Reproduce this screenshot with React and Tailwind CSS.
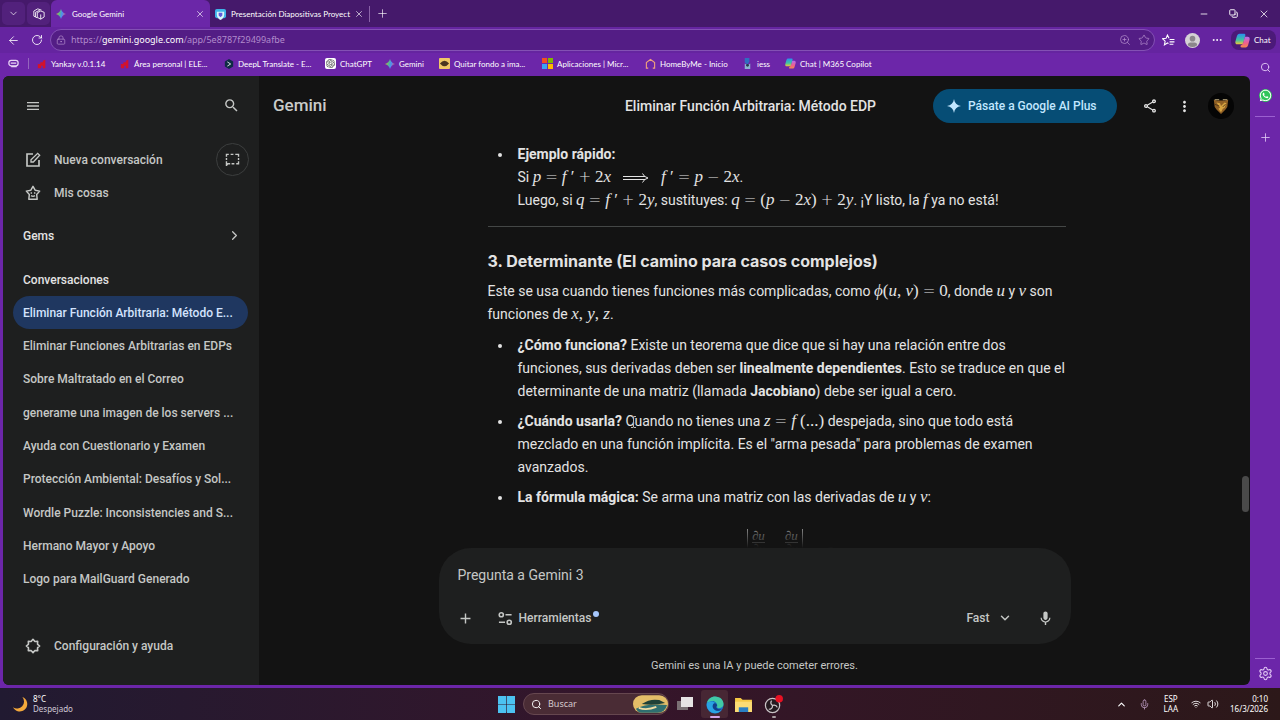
import React from "react";
import {
  ArrowLeft,
  ChevronDown,
  ChevronRight,
  ChevronUp,
  Copy,
  Ellipsis,
  LockKeyhole,
  Mic,
  Minus,
  Plus,
  RotateCw,
  Search,
  Settings,
  Star,
  Volume2,
  Wifi,
  X,
  ZoomIn,
} from "lucide-react";
import { FaWhatsapp } from "react-icons/fa";
import {
  MdAdd,
  MdMenu,
  MdMic,
  MdMoreVert,
  MdOutlineShare,
  MdSearch,
} from "react-icons/md";
import { SiOpenai } from "react-icons/si";

const chats = [
  "Eliminar Función Arbitraria: Método E...",
  "Eliminar Funciones Arbitrarias en EDPs",
  "Sobre Maltratado en el Correo",
  "generame una imagen de los servers ...",
  "Ayuda con Cuestionario y Examen",
  "Protección Ambiental: Desafíos y Sol...",
  "Wordle Puzzle: Inconsistencies and S...",
  "Hermano Mayor y Apoyo",
  "Logo para MailGuard Generado",
];

const Spark = ({ className }) => (
  <svg viewBox="0 0 24 24" className={className} fill="currentColor">
    <path d="M12 0c1 7 5 11 12 12-7 1-11 5-12 12-1-7-5-11-12-12C7 11 11 7 12 0z" />
  </svg>
);

const GeminiLogo = () => (
  <svg viewBox="0 0 24 24" className="size-[10px] shrink-0">
    <defs>
      <linearGradient id="gem" x1="0" y1="0.4" x2="1" y2="0.6">
        <stop offset="0" stopColor="#f5b93c" />
        <stop offset="0.3" stopColor="#5fbf7a" />
        <stop offset="0.6" stopColor="#4c8df6" />
        <stop offset="1" stopColor="#e8566b" />
      </linearGradient>
    </defs>
    <path
      fill="url(#gem)"
      d="M12 0c2 6 5 9.500 12 12-7 2.500-10 6-12 12-2-6-5-9.500-12-12C7 9.500 10 6 12 0z"
    />
  </svg>
);

const CopilotLogo = ({ className }) => (
  <svg viewBox="0 0 24 24" className={className}>
    <defs>
      <linearGradient id="copA" x1="0" y1="0" x2="0" y2="1">
        <stop offset="0" stopColor="#2a8df0" />
        <stop offset="0.6" stopColor="#3fc4a0" />
        <stop offset="1" stopColor="#f0c53a" />
      </linearGradient>
      <linearGradient id="copB" x1="0" y1="0" x2="0" y2="1">
        <stop offset="0" stopColor="#b46af0" />
        <stop offset="0.6" stopColor="#f0608a" />
        <stop offset="1" stopColor="#f58a4a" />
      </linearGradient>
    </defs>
    <path fill="url(#copA)" d="M7 1h7c2 0 3 1 2.500 3l-3 11c-.6 2-1.500 3-3.500 3H4c-3 0-4-2-3.300-5L3 5c.7-2.600 2-4 4-4z" />
    <path fill="url(#copB)" d="M16 6h4c3 0 4 2 3.300 5L21 19c-.7 2.600-2 4-4 4h-6c-2 0-2.500-1-2-3 2-1 3.500-2 4-4l2-7c.3-1.500.5-2 1-3z" />
  </svg>
);

const RedBlocks = () => (
  <svg viewBox="0 0 12 12" className="size-[10px] shrink-0" fill="#d3122c">
    <path d="M1 6h3V4h3V2l3-1v10H7V8H5v3H1z" />
  </svg>
);

const bookmarks = [
  { name: "Yankay v.0.1.14", icon: <RedBlocks />, width: "w-[83px]" },
  { name: "Área personal | ELE...", icon: <RedBlocks />, width: "w-[104px]" },
  {
    name: "DeepL Translate - E...",
    width: "w-[101px]",
    icon: (
      <svg viewBox="0 0 12 12" className="size-[10px] shrink-0">
        <path d="M6 0l5 3v6l-5 3-5-3V3z" fill="#0f2b46" />
        <path d="M4 3.500l4 2.500-4 2.500" fill="none" stroke="#fff" />
      </svg>
    ),
  },
  {
    name: "ChatGPT",
    width: "w-[60px]",
    icon: (
      <span className="flex size-[11px] shrink-0 items-center justify-center rounded-[2px] bg-white text-[9px] text-[#444]">
        <SiOpenai />
      </span>
    ),
  },
  { name: "Gemini", icon: <GeminiLogo />, width: "w-[54px]" },
  {
    name: "Quitar fondo a ima...",
    width: "w-[103px]",
    icon: (
      <svg viewBox="0 0 12 12" className="size-[11px] shrink-0">
        <rect width="12" height="12" rx="1" fill="#f0c766" />
        <path d="M1 6q5-6 10 0q-5 6-10 0z" fill="#4b3420" />
      </svg>
    ),
  },
  {
    name: "Aplicaciones | Micr...",
    width: "w-[103px]",
    icon: (
      <svg viewBox="0 0 12 12" className="size-[11px] shrink-0">
        <path fill="#f25022" d="M0 0h5.500v5.500H0z" />
        <path fill="#7fba00" d="M6.500 0H12v5.500H6.500z" />
        <path fill="#39a5f5" d="M0 6.500h5.500V12H0z" />
        <path fill="#ffb900" d="M6.500 6.500H12V12H6.500z" />
      </svg>
    ),
  },
  {
    name: "HomeByMe - Inicio",
    width: "w-[97px]",
    icon: (
      <svg viewBox="0 0 12 12" className="size-[11px] shrink-0" fill="none" stroke="#f0a27c" strokeWidth="1.200">
        <path d="M3.500 11H1.500V5L6 1.500 10.500 5v6h-2" />
      </svg>
    ),
  },
  {
    name: "iess",
    width: "w-[43px]",
    icon: (
      <svg viewBox="0 0 12 12" className="size-[11px] shrink-0">
        <path d="M3 0h5v4L6 7 3 5z" fill="#2f6fc0" />
        <path d="M3 6l3 2 3-2v6H3z" fill="#89b5cf" />
        <circle cx="6" cy="8" r="1.500" fill="#263b50" />
      </svg>
    ),
  },
  {
    name: "Chat | M365 Copilot",
    width: "w-[90px]",
    icon: <CopilotLogo className="size-[11px] shrink-0" />,
  },
];

const TitleBar = () => (
  <div className="flex h-[27px] shrink-0 items-center bg-[#45196b] text-[8px] text-white">
    <div className="flex gap-[2px] pr-px pl-[2px]">
      <button aria-label="Buscar pestañas" className="flex size-[23px] items-center justify-center rounded-[5px] bg-[#52217c]">
        <ChevronDown size={11} strokeWidth={1.5} />
      </button>
      <button aria-label="Espacios de trabajo" className="flex size-[23px] items-center justify-center rounded-[5px] bg-[#52217c]">
        <svg viewBox="0 0 14 14" className="size-[12px]" fill="none" stroke="#fff">
          <path d="M3 10.500l-2-1v-6L5.500 1 10 2.500M5 11.500l-2-1V5L8 2.500M5 5.500l4-2 4 1.500v5.500l-4 2.500-4-2zM9 7.500V13" />
        </svg>
      </button>
    </div>
    <div className="flex h-full w-[159px] items-center rounded-t-[6px] bg-[#6b27a8] pt-px pr-[5px] pl-[5px]">
      <GeminiLogo />
      <span className="ml-[6px] flex-1">Google Gemini</span>
      <button aria-label="Cerrar Google Gemini">
        <X size={10} strokeWidth={1.5} />
      </button>
    </div>
    <div className="flex h-full w-[158px] items-center pt-px pr-[4px] pl-[5px]">
      <svg viewBox="0 0 12 12" className="size-[11px] shrink-0">
        <rect width="12" height="10" rx="2" fill="#3fb3e8" />
        <path d="M2 3h8v3c0 3-2 5-4 6-2-1-4-3-4-6z" fill="#d8f6fb" />
        <path d="M4 4h4v3L6 9 4 7z" fill="#6259d8" />
      </svg>
      <span className="ml-[5px] flex-1 whitespace-nowrap">Presentación Diapositivas Proyect</span>
      <button aria-label="Cerrar Presentación">
        <X size={10} strokeWidth={1.5} />
      </button>
    </div>
    <button aria-label="Nueva pestaña" className="ml-px flex h-[16px] items-center border-l border-[#8a62a8] pl-[6px]">
      <Plus size={13} strokeWidth={1.2} />
    </button>
    <div className="ml-auto flex items-center gap-[20px] pr-[10px]">
      <button aria-label="Minimizar">
        <Minus size={10} strokeWidth={2} />
      </button>
      <button aria-label="Restaurar">
        <Copy size={9} strokeWidth={2.5} className="-scale-x-100 rotate-90" />
      </button>
      <button aria-label="Cerrar">
        <X size={12} strokeWidth={1.5} />
      </button>
    </div>
  </div>
);

const AddressBar = () => (
  <div className="flex h-[26px] shrink-0 items-center bg-[#6524a0] text-white">
    <button aria-label="Atrás" className="ml-[7px]">
      <ArrowLeft size={13} strokeWidth={1.5} />
    </button>
    <button aria-label="Actualizar" className="ml-[11px]">
      <RotateCw size={12} strokeWidth={1.7} />
    </button>
    <div className="ml-[7px] flex h-[22px] flex-1 items-center rounded-full border border-[#8350b4] bg-[#531d85] pr-[4px] pl-[5px] font-['Noto_Sans',sans-serif] text-[9px] text-[#b18bcb]">
      <LockKeyhole size={10} strokeWidth={1.7} />
      <div
        role="textbox"
        aria-label="Dirección"
        contentEditable
        suppressContentEditableWarning
        className="ml-[5px] flex-1"
      >
        https://<span className="text-white">gemini.google.com</span>/app/5e8787f29499afbe
      </div>
      <button aria-label="Zoom">
        <ZoomIn size={12} strokeWidth={1.5} />
      </button>
      <button aria-label="Agregar a favoritos" className="ml-[7px]">
        <Star size={12} strokeWidth={1.5} />
      </button>
    </div>
    <button aria-label="Favoritos" className="ml-[7px]">
      <svg viewBox="0 0 24 24" className="size-[13px]" fill="none" stroke="currentColor" strokeWidth="2">
        <path d="M13 8l-3-6-2.500 6-6.500.8 4.800 4.400L4.500 20l5.500-3.500 2 1.200M14 10h9M14 14.500h9M14 19h7" />
      </svg>
    </button>
    <button aria-label="Perfil" className="ml-[10px] size-[15px] overflow-hidden rounded-full bg-[#d5d2d5]">
      <svg viewBox="0 0 16 16" fill="#8b868b">
        <circle cx="8" cy="6" r="3" />
        <path d="M3 13q0-3 3-3h4q3 0 3 3-5 4-10 0z" />
      </svg>
    </button>
    <button aria-label="Más" className="ml-[11px]">
      <Ellipsis size={12} strokeWidth={2} />
    </button>
    <button className="mr-[4px] ml-[8px] flex h-[20px] w-[45px] items-center gap-[4px] rounded-[8px] bg-[#4b1a79] pl-[4px] text-[8px]">
      <CopilotLogo className="size-[15px]" />
      Chat
    </button>
  </div>
);

const Bookmarks = () => (
  <nav className="flex h-[23px] shrink-0 items-center pb-[2px] text-[8px] text-white">
    <span className="mr-[8px] ml-[5px] flex h-[11px] w-[21px] items-center border-r border-[#9465bd]">
      <svg viewBox="0 0 12 12" className="size-[11px]" fill="none" stroke="#e8d6f5" strokeWidth="1.4">
        <rect x="1" y="2.5" width="10" height="6" rx="2.500" />
        <path d="M3 5.500h6M3.500 9.500h6" />
      </svg>
    </span>
    <div className="flex">
      {bookmarks.map((item) => (
        <a key={item.name} href="#" className={`flex items-center gap-[4px] whitespace-nowrap ${item.width}`}>
          {item.icon}
          {item.name}
        </a>
      ))}
    </div>
  </nav>
);

const Sidebar = () => (
  <aside className="flex w-[256px] shrink-0 flex-col bg-[#1e1f1f] px-[10px] pb-[23px] text-[12px] font-medium text-[#c5c7c5]">
    <div className="flex h-[59px] items-center justify-between pr-[9px] pl-[12px]">
      <button aria-label="Menú">
        <MdMenu size={16} />
      </button>
      <button aria-label="Buscar">
        <MdSearch size={17} />
      </button>
    </div>
    <div className="mt-[8px] flex h-[33px] items-center justify-between pl-[12px]">
      <button className="flex items-center gap-[13px]">
        <svg viewBox="0 0 24 24" className="size-[16px]" fill="none" stroke="currentColor" strokeWidth="2.5">
          <path d="M12 3H3v18h18v-9" />
          <path d="M9 15v-3.500L19 2l3 3-9.500 10z" strokeWidth="2" />
        </svg>
        Nueva conversación
      </button>
      <button aria-label="Chat temporal" className="flex size-[33px] items-center justify-center rounded-full border border-[#3c3e3e]">
        <svg viewBox="0 0 16 14" className="h-[13px] w-[15px]" fill="none" stroke="currentColor" strokeWidth="1.5">
          <path d="M1.500 4V1.500H4M6 1.500h3M11 1.500h3.500V4M14.500 5.500v2M14.500 9v2.500H12M10 11.500H7M5.500 11.500H3l-1.500 2V9M1.500 7.500v-2" />
        </svg>
      </button>
    </div>
    <button className="flex h-[33px] items-center gap-[13px] pl-[12px]">
      <svg viewBox="0 0 24 24" className="size-[16px]" fill="none" stroke="currentColor" strokeWidth="2.2" strokeLinejoin="round">
        <path d="M12 2l3.200 5.800 6.800 1.400-4.500 5 .8 7.300H5.700l.8-7.300L2 9.200l6.800-1.400z" />
        <path d="M9.500 11v2M14.500 11v2M9 16q3 2 6 0" />
      </svg>
      Mis cosas
    </button>
    <button className="mt-[10px] flex h-[33px] items-center justify-between pr-[7px] pl-[10px] text-[#e3e3e3]">
      Gems
      <ChevronRight size={15} strokeWidth={2} className="text-[#c5c7c5]" />
    </button>
    <h2 className="mt-[11px] flex h-[33px] items-center pl-[10px] text-[#e3e3e3]">Conversaciones</h2>
    <nav className="mr-px grid h-[300px] auto-rows-fr">
      {chats.map((chat, i) => (
        <a
          key={chat}
          href="#"
          className={`flex items-center rounded-full pl-[10px] whitespace-nowrap ${
            i === 0 ? "bg-[#1f3760] text-[#d3e3fd]" : ""
          }`}
        >
          {chat}
        </a>
      ))}
    </nav>
    <button className="mt-auto flex h-[33px] items-center gap-[13px] pl-[12px]">
      <svg viewBox="0 0 24 24" className="size-[16px]" fill="none" stroke="currentColor" strokeWidth="2.4" strokeLinejoin="round">
        <path d="M12 2l2.500 3a7.500 7.500 0 0 1 .5.2l4-.2-.2 4 .2.500 3 2.500-3 2.500-.2.5.2 4-4-.2-.5.200L12 22l-2.500-3-.5-.2-4 .2.200-4-.2-.5L2 12l3-2.500.2-.5-.2-4 4 .2.500-.2z" />
      </svg>
      Configuración y ayuda
    </button>
  </aside>
);

// Inline formula: letters go in <i>, operators in <Op>
const Tex = ({ children }) => (
  <span className="font-['Liberation_Serif',serif] text-[17px] leading-none whitespace-nowrap">{children}</span>
);

const Op = ({ children }) => (
  <span className="mx-[4px] font-['DejaVu_Sans',sans-serif] text-[15px] leading-none font-extralight">{children}</span>
);

const Implies = () => (
  <svg viewBox="0 0 26 10" className="mx-[12px] inline h-[10px] w-[26px]" fill="none" stroke="currentColor">
    <path d="M0 3.500h22M0 6.500h22M19.500 0.500q1.500 3.500 5.500 4.500q-4 1-5.500 4.500" />
  </svg>
);

const Fraction = ({ below }) => (
  <span className="flex flex-col items-center text-[13px] leading-[12px] italic">
    <span className="border-b border-current pt-px">∂u</span>
    <span>∂{below}</span>
  </span>
);

const Header = () => (
  <header className="flex h-[60px] shrink-0 items-center pl-[14px] text-[#e3e3e3]">
    <div className="flex-1 text-[17px] font-medium text-[#c9cbc9]">Gemini</div>
    <h1 className="pr-[6px] text-[14px] font-medium">Eliminar Función Arbitraria: Método EDP</h1>
    <div className="flex flex-1 items-center justify-end pr-[16px]">
      <button className="flex h-[34px] w-[184px] items-center gap-[7px] rounded-full bg-[#064d75] pl-[14px] text-[12px] font-medium whitespace-nowrap text-[#c2e7ff]">
        <Spark className="size-[14px]" />
        Pásate a Google AI Plus
      </button>
      <button aria-label="Compartir" className="ml-[25px]">
        <MdOutlineShare size={16} />
      </button>
      <button aria-label="Más opciones" className="ml-[18px]">
        <MdMoreVert size={17} />
      </button>
      <button aria-label="Cuenta" className="ml-[15px] flex size-[26px] items-center justify-center rounded-full bg-[#050505]">
        <svg viewBox="0 0 20 20" className="size-[18px]">
          <path d="M2 3q8 2 16 0l-1 8-2 3-5 5-5-5-2-3z" fill="#8f5f24" />
          <path d="M5 6l4 1 1 3 4-4 2 1-2 5-2 1-2 4-3-4 2-1z" fill="#d7a340" />
          <path d="M3 8l5 2M12 11l3-3" stroke="#4f3518" />
          <path d="M3 3h5M12 3h5" stroke="#c9b98a" />
        </svg>
      </button>
    </div>
  </header>
);

const Answer = () => (
  <div className="relative min-h-0 flex-1 overflow-hidden">
    <div className="mx-auto w-full max-w-[632px] pt-[7px] pr-[5px] pl-[49px] text-[14px] leading-[23px] text-[#e3e3e3]">
      <ul className="list-disc pl-[25px]">
        <li className="pl-[5px]">
          <strong>Ejemplo rápido:</strong>
          <br />
          Si <Tex><i>p</i><Op>=</Op><i>f</i> ′<Op>+</Op>2<i>x</i><Implies /><i>f</i> ′<Op>=</Op><i>p</i><Op>−</Op>2<i>x</i></Tex>.
          <br />
          Luego, si <Tex><i>q</i><Op>=</Op><i>f</i> ′<Op>+</Op>2<i>y</i></Tex>, sustituyes:{" "}
          <Tex><i>q</i><Op>=</Op>(<i>p</i><Op>−</Op>2<i>x</i>)<Op>+</Op>2<i>y</i></Tex>. ¡Y listo, la{" "}
          <Tex><i>f</i></Tex> ya no está!
        </li>
      </ul>
      <hr className="mt-[14px] border-[#444746]" />
      <h3 className="mt-[22px] font-['Inter',sans-serif] text-[16px] leading-[24px] font-bold">
        3. Determinante (El camino para casos complejos)
      </h3>
      <p className="mt-[7px]">
        Este se usa cuando tienes funciones más complicadas, como{" "}
        <Tex><i>ϕ</i>(<i>u</i>, <i>v</i>)<Op>=</Op>0</Tex>, donde <Tex><i>u</i></Tex> y <Tex><i>v</i></Tex> son
        <br />
        funciones de <Tex><i>x</i>, <i>y</i>, <i>z</i></Tex>.
      </p>
      <ul className="mt-[8px] flex list-disc flex-col gap-[7px] pl-[25px]">
        <li className="pl-[5px]">
          <strong>¿Cómo funciona?</strong> Existe un teorema que dice que si hay una relación entre dos
          <br />
          funciones, sus derivadas deben ser <strong>linealmente dependientes</strong>. Esto se traduce en que el
          <br />
          determinante de una matriz (llamada <strong>Jacobiano</strong>) debe ser igual a cero.
        </li>
        <li className="pl-[5px]">
          <strong>¿Cuándo usarla?</strong>{" "}
          <span className="relative">
            C
            {/* mouse pointer resting on the word */}
            <svg viewBox="0 0 7 12" className="absolute top-[3px] left-[5px] h-[12px] w-[7px]" fill="none" stroke="#b5b5b5">
              <path d="M1 .5h2l.5.5.5-.5h2M3.500 1v10M1 11.500h2l.5-.5.5.5h2" />
            </svg>
          </span>
          uando no tienes una <Tex><i>z</i><Op>=</Op><i>f</i> (...)</Tex> despejada, sino que todo está
          <br />
          mezclado en una función implícita. Es el "arma pesada" para problemas de examen
          <br />
          avanzados.
        </li>
        <li className="pl-[5px]">
          <strong>La fórmula mágica:</strong> Se arma una matriz con las derivadas de <Tex><i>u</i></Tex> y{" "}
          <Tex><i>v</i></Tex>:
        </li>
      </ul>
      <div className="mt-[20px] flex items-start justify-center gap-[10px] pl-[29px] font-['Liberation_Serif',serif] text-[17px] text-[#8a8a8a]">
        <div className="flex h-[60px] gap-[20px] border-x border-current px-[4px]">
          <Fraction below="x" />
          <Fraction below="y" />
        </div>
        <span className="pt-[12px]">= 0</span>
      </div>
    </div>
    <div className="absolute inset-x-0 bottom-0 h-[20px] bg-gradient-to-b from-transparent to-[#131313]" />
  </div>
);

const Composer = () => (
  <div className="mx-auto w-full max-w-[632px] shrink-0 rounded-[32px] bg-[#1e1f1f] pt-[16px] pr-[17px] pb-[12px] pl-[19px] text-[#c5c7c5]">
    <input
      aria-label="Pregunta a Gemini 3"
      placeholder="Pregunta a Gemini 3"
      className="block h-[22px] w-full bg-transparent text-[14px] outline-none placeholder:text-[#c5c7c5]"
    />
    <div className="mt-[18px] flex h-[28px] items-center text-[12px] font-medium">
      <button aria-label="Agregar archivos" className="-ml-px">
        <MdAdd size={17} />
      </button>
      <button className="ml-[24px] flex items-center gap-[6px]">
        <svg viewBox="0 0 16 16" className="size-[15px]" fill="none" stroke="currentColor" strokeWidth="1.7">
          <circle cx="3.5" cy="4" r="2.2" />
          <path d="M8 4h6.500M1 12h6.500" />
          <circle cx="12" cy="12" r="2.2" />
        </svg>
        Herramientas
        <span className="mb-[8px] -ml-[4px] size-[6px] rounded-full bg-[#a8c7fa]" />
      </button>
      <button className="ml-auto flex items-center gap-[8px]">
        Fast
        <ChevronDown size={14} strokeWidth={2.5} />
      </button>
      <button aria-label="Micrófono" className="ml-[25px]">
        <MdMic size={17} />
      </button>
    </div>
  </div>
);

const EdgeSidebar = () => (
  <aside className="flex w-[30px] shrink-0 flex-col items-center pt-[9px] pb-[7px] text-[#e3c9f5]">
    <button aria-label="Buscar en la barra lateral">
      <Search size={11} strokeWidth={2} />
    </button>
    <button aria-label="WhatsApp" className="mt-[16px] flex size-[13px] items-center justify-center rounded-full bg-[#2fc65a] text-white">
      <FaWhatsapp size={13} />
    </button>
    <hr className="mt-[14px] w-[20px] border-[#9b5fd0]" />
    <button aria-label="Personalizar" className="mt-[14px]">
      <Plus size={13} strokeWidth={1.5} />
    </button>
    <hr className="mt-auto w-[20px] border-[#9b5fd0]" />
    <button aria-label="Configuración" className="mt-[7px]">
      <Settings size={15} strokeWidth={1.7} />
    </button>
  </aside>
);

const Taskbar = () => (
  <footer className="flex h-[32px] shrink-0 items-center bg-gradient-to-r from-[#211a31] via-[#35152a] to-[#2c1819] font-['Noto_Sans',sans-serif] text-[9px] text-white">
    <div className="flex flex-1 items-center gap-[5px] pl-[13px]">
      <svg viewBox="0 0 16 16" className="size-[15px]">
        <path d="M10 0a8 8 0 1 1-10 11 7.500 7.500 0 0 0 10-11z" fill="#f3a83b" />
      </svg>
      <div className="text-[8px] leading-[10px]">
        <div>8°C</div>
        <div className="text-[#cfc8d6]">Despejado</div>
      </div>
    </div>
    <div className="flex items-center">
      <button aria-label="Inicio">
        <svg viewBox="0 0 16 16" className="size-[17px]" fill="#4cc2f1">
          <path d="M0 0h7.700v7.700H0zM8.300 0H16v7.700H8.300zM0 8.300h7.700V16H0zM8.300 8.300H16V16H8.300z" />
        </svg>
      </button>
      <label className="ml-[8px] flex h-[22px] w-[146px] items-center rounded-full border border-[#66474f] bg-[#4a2c35] pl-[7px]">
        <Search size={11} strokeWidth={2} />
        <input
          aria-label="Buscar"
          placeholder="Buscar"
          className="ml-[6px] w-[60px] min-w-0 flex-1 bg-transparent text-[9px] outline-none placeholder:text-[#d5c9cd]"
        />
        <svg viewBox="0 0 36 18" className="h-[18px] w-[35px]">
          <rect width="36" height="18" rx="9" fill="#e3bd68" />
          <path d="M3 14q10-6 32-4-2 8-10 8H9q-4 0-6-4z" fill="#2f6f70" />
          <path d="M9 9q9-6 18-4l6 3q-12 3-24 1z" fill="#1f4138" />
          <path d="M6 13q8 3 18-1" fill="none" stroke="#f0dca4" strokeWidth="2" />
        </svg>
      </label>
      <button aria-label="Vista de tareas" className="ml-[8px]">
        <svg viewBox="0 0 16 16" className="size-[16px]">
          <path d="M0 5h11v9H0z" fill="#7a7074" />
          <path d="M4 1h12v10H4z" fill="#e6e3e4" />
        </svg>
      </button>
      <button aria-label="Microsoft Edge" className="ml-[8px] flex h-[28px] w-[27px] flex-col items-center justify-end gap-[2px] rounded-[3px] bg-[#472734]">
        <svg viewBox="0 0 20 20" className="size-[18px]">
          <circle cx="10" cy="10" r="9.5" fill="#1b6fc2" />
          <path d="M1 8C2 3 6 .5 10 .5c6 0 9.500 4 9.500 8.500 0 3-2 4.500-5 4.500-2 0-3-1-2-2C13 8 10 5 6.500 5.500 4 6 2 7 1 8z" fill="#41c9a5" />
          <path d="M1 8c2-2 7-3 9 0-3 0-4 6 1 8 3 1 5 0 6.500-1-3 5-11 6-15 0C1 13 .5 10 1 8z" fill="#29a3e3" />
          <path d="M10 8c-3 0-4 6 1 8 3 1 5 0 6.500-1-3 0-6-.5-6.500-3 2-1 1.500-3-1-4z" fill="#123f8a" />
        </svg>
        <span className="h-[2px] w-[10px] rounded-full bg-[#d3a4e8]" />
      </button>
      <button aria-label="Explorador de archivos" className="ml-[7px]">
        <svg viewBox="0 0 18 16" className="h-[15px] w-[17px]">
          <path d="M0 1h6l2 2h10v13H0z" fill="#f5c944" />
          <path d="M0 5h18v11H0z" fill="#fbdc75" />
          <path d="M4 11h10v5H4z" fill="#2a7fc4" />
        </svg>
      </button>
      <button aria-label="OBS Studio" className="ml-[12px] flex h-[28px] flex-col items-center justify-end gap-[2px]">
        <svg viewBox="0 0 20 20" className="size-[19px]" fill="none" stroke="#c9c3c6" strokeWidth="1.3">
          <circle cx="9" cy="11" r="7.5" fill="#241a20" />
          <path d="M9 11q-3-2-1-5M9 11q4-1 5 2M9 11q0 4-4 4" />
          <circle cx="16" cy="4" r="4" fill="#e81123" stroke="none" />
        </svg>
        <span className="h-[2px] w-[4px] rounded-full bg-[#a79da1]" />
      </button>
    </div>
    <div className="flex flex-1 items-center justify-end pr-[12px]">
      <ChevronUp size={11} strokeWidth={2.5} />
      <Mic size={11} strokeWidth={1.7} className="ml-[12px] text-[#c9a6cf]" />
      <div className="ml-[14px] text-center text-[8px] leading-[10px]">
        <div>ESP</div>
        <div>LAA</div>
      </div>
      <Wifi size={10} strokeWidth={2} className="ml-[13px]" />
      <Volume2 size={12} strokeWidth={1.7} className="ml-[6px]" />
      <div className="ml-[11px] text-right text-[8px] leading-[10px]">
        <div>0:10</div>
        <div>16/3/2026</div>
      </div>
    </div>
  </footer>
);

export default function App() {
  return (
    <div className="flex h-screen flex-col overflow-hidden bg-[#6c26a9] font-['Lato',sans-serif]">
      <TitleBar />
      <AddressBar />
      <div className="flex min-h-0 flex-1">
        <div className="flex min-w-0 flex-1 flex-col pb-[3px] pl-[3px]">
          <Bookmarks />
          <div className="relative flex min-h-0 flex-1 overflow-hidden rounded-[6px] bg-[#131313] font-['Roboto',sans-serif]">
            <Sidebar />
            <main className="flex min-w-0 flex-1 flex-col">
              <Header />
              <Answer />
              <Composer />
              <p className="flex h-[41px] shrink-0 items-center justify-center pt-[3px] text-[11px] text-[#c5c7c5]">
                Gemini es una IA y puede cometer errores.
              </p>
            </main>
            <div className="absolute top-[400px] right-px h-[36px] w-[7px] rounded-full bg-[#4a4a4a]" />
          </div>
        </div>
        <EdgeSidebar />
      </div>
      <Taskbar />
    </div>
  );
}
